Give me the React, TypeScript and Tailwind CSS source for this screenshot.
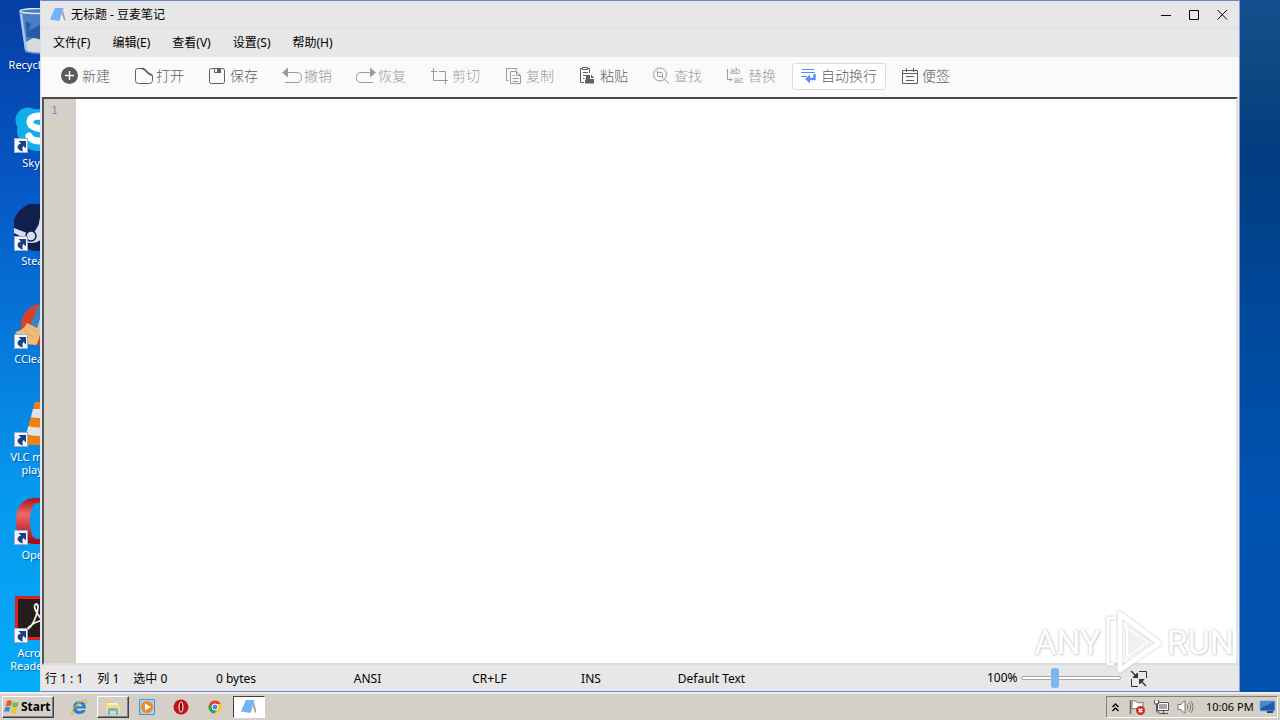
import { useState } from 'react';
import type { ReactNode } from 'react';
import { clsx } from 'clsx';

interface ToolItem {
  label: string;
  icon: ReactNode;
  disabled?: boolean;
}

interface DesktopItem {
  label: string;
  icon: ReactNode;
}

const MENUS = ['文件(F)', '编辑(E)', '查看(V)', '设置(S)', '帮助(H)'];

function ToolIcon({ children }: { children: ReactNode }) {
  return (
    <svg
      viewBox="0 0 18 18"
      className="h-[18px] w-[18px] shrink-0 overflow-visible"
      fill="none"
      stroke="currentColor"
      strokeWidth="1"
      aria-hidden="true"
    >
      {children}
    </svg>
  );
}

const TOOLS: ToolItem[] = [
  {
    label: '新建',
    icon: (
      <ToolIcon>
        <circle cx="9.5" cy="8.5" r="8.5" fill="#5a5a5a" stroke="none" />
        <path d="M9.500 4v9M5 8.500h9" stroke="#fff" strokeWidth="1.400" />
      </ToolIcon>
    ),
  },
  {
    label: '打开',
    icon: (
      <ToolIcon>
        <path d="M8.500 1.500H3.500Q1.500 1.500 1.500 3.500v10q0 3 3 3h11q3 0 3-3V8.500" />
        <path d="M8 1.500q2 .2 3.500 1.800l3 3q1.500 1.300 4 2.200" strokeWidth="1.800" />
      </ToolIcon>
    ),
  },
  {
    label: '保存',
    icon: (
      <ToolIcon>
        <rect x="1.500" y="1.500" width="15" height="15" rx="2" />
        <path d="M6.500 1.500v4h6v-4" />
        <path d="M9.500 1.500h3v4h-3z" fill="currentColor" />
      </ToolIcon>
    ),
  },
  {
    label: '撤销',
    disabled: true,
    icon: (
      <ToolIcon>
        <path d="M0 5.500 6 .5v10z" fill="currentColor" stroke="none" />
        <path d="M5 5.500h10q4.500 0 4.500 5t-4.500 5H3" />
      </ToolIcon>
    ),
  },
  {
    label: '恢复',
    disabled: true,
    icon: (
      <ToolIcon>
        <path d="M20 5.500 14 .5v10z" fill="currentColor" stroke="none" />
        <path d="M15 5.500H5q-4.500 0-4.500 5t4.500 5h12" />
      </ToolIcon>
    ),
  },
  {
    label: '剪切',
    disabled: true,
    icon: (
      <ToolIcon>
        <path d="M3.500 1v12.500H18M1 4.500h6M9 4.500h6.500V17" />
      </ToolIcon>
    ),
  },
  {
    label: '复制',
    disabled: true,
    icon: (
      <ToolIcon>
        <path d="M4.500 13.500h-2v-12h10v2" />
        <path d="M6.500 4.500h6l4 4v8h-10z" />
        <path d="M12.500 4.500v4h4M8.500 8.500h2M8.500 11.500h6M8.500 14.500h6" />
      </ToolIcon>
    ),
  },
  {
    label: '粘贴',
    icon: (
      <ToolIcon>
        <path d="M4 1.500H2.500v14H6M10 1.500h1.500V6" />
        <path d="M4.500 .5h5v2h-5zM5 5.500h5M5 8.500h3M5 11.500h1.500" />
        <path d="M8 8h4v4h4v4.500H7v-4h1z" fill="currentColor" stroke="none" />
        <path d="M13 7.500 16 11h-3z" fill="currentColor" stroke="none" />
      </ToolIcon>
    ),
  },
  {
    label: '查找',
    disabled: true,
    icon: (
      <ToolIcon>
        <circle cx="8" cy="7.500" r="6.500" />
        <path d="m12.500 12.500 4.500 4" />
        <rect x="5.500" y="5.500" width="5" height="4" rx="1" />
        <path d="M5.500 7.500V3.500M10.500 7v4.500" />
      </ToolIcon>
    ),
  },
  {
    label: '替换',
    disabled: true,
    icon: (
      <ToolIcon>
        <path d="M1.500 2v10.500h4M4 10.500l2 2-2 2" />
        <g fill="currentColor" stroke="none" fontFamily="Liberation Sans, sans-serif" fontSize="9">
          <text x="4" y="7">ab</text>
          <text x="8" y="16">ac</text>
        </g>
      </ToolIcon>
    ),
  },
];

function ShortcutArrow() {
  return (
    <g>
      <rect x=".5" y="32.500" width="13" height="14" fill="#f3f6fb" stroke="#9ab0c8" />
      <path d="M4.500 35h7.500v7.500l-2.500-2.500Q7.500 42 9 45.500 3.500 44 3.500 40.500 4 38 7 37.500z" fill="#1d3f80" />
    </g>
  );
}

function DesktopIcon({ children, shortcut = true }: { children: ReactNode; shortcut?: boolean }) {
  return (
    <svg viewBox="0 0 48 48" className="h-12 w-12" aria-hidden="true">
      {children}
      {shortcut && <ShortcutArrow />}
    </svg>
  );
}

const DESKTOP: DesktopItem[] = [
  {
    label: 'Recycle Bin',
    icon: (
      <DesktopIcon shortcut={false}>
        <path d="M5 3h38l-6 41q-13 4-26 0z" fill="#5f91cf" />
        <path d="M9 6h18v32H13z" fill="#4a7fc4" />
        <path d="m12 13 5 3-3 7 8-4 6-4v16l-15-2z" fill="#265aa8" />
        <path d="m12 34 7-4 9 2 8 5-1 6q-10 3-22 0z" fill="#d5dbdf" />
        <path d="m7 6 5 36" stroke="#a8c8ec" strokeWidth="2" />
        <ellipse cx="24" cy="3" rx="18" ry="2.500" fill="#4c7cbd" stroke="#d6e3f3" strokeWidth="1.500" />
      </DesktopIcon>
    ),
  },
  {
    label: 'Skype',
    icon: (
      <DesktopIcon>
        <circle cx="14" cy="14" r="12.500" fill="#12aeea" />
        <circle cx="34" cy="34" r="12.500" fill="#12aeea" />
        <circle cx="24" cy="24" r="21" fill="#12aeea" />
        <path
          d="M34 15q-4-5-10-5-9 1-8 7 1 4 9 5.500t9 6.500q0 6-9 6-7 0-10-5"
          fill="none"
          stroke="#fff"
          strokeWidth="7"
          strokeLinecap="round"
        />
      </DesktopIcon>
    ),
  },
  {
    label: 'Steam',
    icon: (
      <DesktopIcon>
        <circle cx="23" cy="23" r="24" fill="#101f4c" />
        <path d="M0 24l13 5q4-2 7 0l5-9q0-10 8-12h8v18l-11 4q-3 9-12 9-7 0-8-5L0 29z" fill="#d5dfeb" />
        <circle cx="17" cy="32" r="5" fill="#d5dfeb" stroke="#101f4c" strokeWidth="1.500" />
        <circle cx="34" cy="17" r="6" fill="#2f5f9c" />
      </DesktopIcon>
    ),
  },
  {
    label: 'CCleaner',
    icon: (
      <DesktopIcon>
        <circle cx="28" cy="23" r="21" fill="#d7402b" />
        <circle cx="29" cy="24" r="10" fill="#b9c8d4" />
        <path d="m24 4 6-2-7 25-7-3z" fill="#3a83bd" />
        <path d="m13 21 12 6q2 9-3 16l-10-1L1 30q8-1 12-9z" fill="#f0bd78" />
        <path d="m14 24 9 6M10 28l10 8" stroke="#dca764" strokeWidth="1" />
      </DesktopIcon>
    ),
  },
  {
    label: 'VLC media player',
    icon: (
      <DesktopIcon>
        <path d="M10 33h28l6 12H7z" fill="#f08010" />
        <path d="M21 2h6l10 36q-13 5-26 0z" fill="#f08010" />
        <path d="m19 9-2 8q7 2 14 0l-2-8zM14.500 26 12 34q12 4 24 0l-2.500-8q-9.500 3-19 0z" fill="#dfe5e8" />
      </DesktopIcon>
    ),
  },
  {
    label: 'Opera',
    icon: (
      <DesktopIcon>
        <defs>
          <linearGradient id="opera" x1="0" y1="0" x2="0" y2="1">
            <stop offset="0" stopColor="#a90f18" />
            <stop offset=".35" stopColor="#ec6a68" />
            <stop offset="1" stopColor="#a8000c" />
          </linearGradient>
        </defs>
        <path
          fillRule="evenodd"
          d="M24 0q22 1 22 23T24 46 2 23 24 0zm0 5q-8 0-8 18t8 18 8-18-8-18z"
          fill="url(#opera)"
        />
      </DesktopIcon>
    ),
  },
  {
    label: 'Acrobat Reader DC',
    icon: (
      <DesktopIcon>
        <rect x="2.500" y="1.500" width="43" height="41" fill="#251c1e" stroke="#e01f1f" strokeWidth="3" />
        <path
          d="M12 34q6-2 10-14t0-12q-4 2 3 12t15 7q2-4-9-3t-19 10z"
          fill="none"
          stroke="#f2eee6"
          strokeWidth="1.800"
        />
      </DesktopIcon>
    ),
  },
];

function NoteLogo({ className }: { className?: string }) {
  return (
    <svg viewBox="0 0 16 16" className={className} aria-hidden="true">
      <path d="m9 2 4 1 2.500 11-5-1z" fill="#f4f4f4" />
      <path d="M5 1h8.500L9.500 14 0 12.500z" fill="#72b3f6" />
      <path d="m13 3 2.500 10.500h-1.500L12 7z" fill="#a89c92" />
    </svg>
  );
}

function TitleBar() {
  return (
    <header className="flex h-7 items-center justify-between border-b border-[#dcdcdc] bg-[#e7e7e7] pr-2 pl-2">
      <div className="flex items-center gap-1">
        <NoteLogo className="h-[16px] w-[18px]" />
        <h1 className="text-[12px] leading-4">无标题 - 豆麦笔记</h1>
      </div>
      <div className="flex gap-[10px]">
        <button type="button" aria-label="最小化" className="grid h-[18px] w-[18px] place-items-center">
          <svg viewBox="0 0 11 11" className="h-[11px] w-[11px]" stroke="#000">
            <path d="M0 6.500h10" />
          </svg>
        </button>
        <button type="button" aria-label="最大化" className="grid h-[18px] w-[18px] place-items-center">
          <svg viewBox="0 0 11 11" className="h-[11px] w-[11px]" fill="none" stroke="#000">
            <path d="M.5 1.500h9v9h-9z" />
          </svg>
        </button>
        <button type="button" aria-label="关闭" className="grid h-[18px] w-[18px] place-items-center">
          <svg viewBox="0 0 11 11" className="h-[11px] w-[11px]" stroke="#000" strokeWidth="1">
            <path d="m.5 1 9.500 9.500M10 1 .5 10.500" />
          </svg>
        </button>
      </div>
    </header>
  );
}

function Toolbar() {
  const [wrap, setWrap] = useState(true);

  return (
    <div
      className="flex h-10 items-center bg-[#fafafa] pb-[2px] pl-[7px] text-[14px] leading-5 font-light text-[#606060]"
      role="toolbar"
    >
      {TOOLS.map((tool) => (
        <button
          key={tool.label}
          type="button"
          disabled={tool.disabled}
          className={clsx('flex w-[74px] shrink-0 items-center gap-1 pl-3', tool.disabled && 'text-[#9a9a9a]')}
        >
          {tool.icon}
          {tool.label}
        </button>
      ))}
      <button
        type="button"
        aria-pressed={wrap}
        onClick={() => setWrap(!wrap)}
        className={clsx(
          'ml-1 flex h-[27px] shrink-0 items-center gap-1 rounded-[3px] border px-2',
          wrap ? 'border-[#dcdcdc] bg-white' : 'border-transparent'
        )}
      >
        <svg viewBox="0 0 16 16" className="h-4 w-4" fill="none" stroke="#5b8ff5" aria-hidden="true">
          <path d="M1 1.500h12M0 4.500h14M0 8.500h6" strokeWidth="1.200" />
          <path d="M13.500 6v5H8" strokeWidth="2.400" />
          <path d="m4 11 5-4.500v9z" fill="#5b8ff5" stroke="none" />
        </svg>
        自动换行
      </button>
      <button type="button" className="ml-4 flex shrink-0 items-center gap-1">
        <svg viewBox="0 0 16 16" className="h-4 w-4" fill="none" stroke="currentColor" aria-hidden="true">
          <path d="M.5 2.500h15v13H.5zM4.500 0v4M11.500 0v4M.5 5.500h15M4 8.500h8M4 12.500h8" />
        </svg>
        便签
      </button>
    </div>
  );
}

function Editor() {
  return (
    <div className="mx-px flex flex-1 border-2 border-t-[#4a4a4a] border-r-[#e6e6da] border-b-[#dcdcdc] border-l-[#555] bg-white">
      <div className="w-8 bg-[#d4d0c8] pt-1 pl-[7px] font-['DejaVu_Sans_Mono',monospace] text-[11px] leading-4 text-[#6f93d8]">
        1
      </div>
      <textarea aria-label="正文" className="flex-1 resize-none bg-white px-1 outline-none" />
    </div>
  );
}

function StatusBar() {
  return (
    <footer className="flex h-[26px] items-center bg-[#e7e7e7] text-[12px] leading-4">
      <div className="flex pt-[2px]">
        <div className="flex w-[173px] gap-[14px] pl-1">
          <span>行 1 : 1</span>
          <span>列 1</span>
          <span>选中 0</span>
        </div>
        <div className="w-[82px] border-l border-[#ebebeb] pl-px">0 bytes</div>
        <div className="w-[142px] border-l border-[#ebebeb] text-center">ANSI</div>
        <div className="w-[102px] border-l border-[#ebebeb] text-center">CR+LF</div>
        <div className="w-[101px] border-l border-[#ebebeb] text-center">INS</div>
        <div className="w-[141px] border-x border-[#ebebeb] text-center">Default Text</div>
      </div>
      <div className="ml-auto flex items-center pr-[92px]">
        <label htmlFor="zoom" className="w-[34px]">
          100%
        </label>
        <input
          id="zoom"
          type="range"
          defaultValue={32}
          className="h-5 w-[100px] appearance-none bg-transparent [&::-webkit-slider-runnable-track]:h-1 [&::-webkit-slider-runnable-track]:rounded-full [&::-webkit-slider-runnable-track]:border [&::-webkit-slider-runnable-track]:border-[#a8a8a8] [&::-webkit-slider-runnable-track]:bg-white [&::-webkit-slider-thumb]:-mt-[9px] [&::-webkit-slider-thumb]:h-5 [&::-webkit-slider-thumb]:w-2 [&::-webkit-slider-thumb]:appearance-none [&::-webkit-slider-thumb]:rounded-[3px] [&::-webkit-slider-thumb]:bg-[#7db7ef]"
        />
        <button type="button" aria-label="退出全屏" className="ml-[9px]">
          <svg viewBox="0 0 17 17" className="h-[17px] w-[17px]" fill="none" stroke="#333" aria-hidden="true">
            <path d="M9 1.500h7.500V8M1.500 9v7.500H8" />
            <path d="m1 1 6 6M16 16l-6-6" strokeWidth="1.400" />
            <path d="M7.500 3v4.500H3z" fill="#333" />
            <path d="M9.500 14V9.500H14z" fill="#333" />
          </svg>
        </button>
      </div>
    </footer>
  );
}

function Watermark() {
  return (
    <div
      className="pointer-events-none absolute right-[6px] bottom-[18px] flex items-center gap-1 font-['Liberation_Sans_Narrow','Roboto',sans-serif] text-[34px] leading-[64px] text-white [text-shadow:0_0_2px_#ccc,0_0_3px_#ddd,1px_1px_2px_#d4d4d4]"
      aria-hidden="true"
    >
      <span>ANY</span>
      <svg
        viewBox="0 0 58 64"
        className="h-16 w-[58px] drop-shadow-[0_0_1px_#bbb]"
        fill="none"
        stroke="#fff"
        strokeLinejoin="round"
      >
        <path d="M11 8H3v46h6" strokeWidth="3" />
        <path d="M15 4v56l39-27z" strokeWidth="5" />
        <path d="m22 18 22 14-22 15z" fill="#f0f0f0" strokeWidth="2" />
      </svg>
      <span>RUN</span>
    </div>
  );
}

const TASKS = [
  {
    name: 'Internet Explorer',
    state: '',
    icon: (
      <>
        <path
          d="M15 9.500H5.500q.5 2.500 3 2.500 2 0 2.700-1h3.500q-1.500 4-6.200 4-6.500 0-6.500-6.300T8.500 2.300 15 9.500zM5.500 7.200h6q-.5-2.200-3-2.200t-3 2.200z"
          fill="#2a7fd4"
          fillRule="evenodd"
        />
        <path d="M3 15Q-1 16 2 10 8 2 14 1q2.500 0 .5 4" fill="none" stroke="#e2b534" strokeWidth="1.200" />
      </>
    ),
  },
  {
    name: 'Windows Explorer',
    state: 'open',
    icon: (
      <>
        <path d="M1 2h6l1 2h7v9H1z" fill="#e9c867" />
        <path d="M2 4h11v8H2z" fill="#fff3bd" />
        <path d="M1 6h14v8H1z" fill="#f4db87" />
        <path d="M3 16v-5q0-2 2-2h6q2 0 2 2v5h-2v-4H5v4z" fill="#6ab6e0" />
      </>
    ),
  },
  {
    name: 'Windows Media Player',
    state: '',
    icon: (
      <>
        <path d="M.5 .5h15v15H.5z" fill="#a5d0ef" stroke="#4e94cc" />
        <circle cx="8" cy="8" r="6" fill="#f18a1c" />
        <path d="m6 4.500 6 3.500-6 3.500z" fill="#fff" />
      </>
    ),
  },
  {
    name: 'Opera',
    state: '',
    icon: (
      <>
        <circle cx="8" cy="8" r="7.500" fill="#c0141c" />
        <ellipse cx="8" cy="8" rx="2.500" ry="5.500" fill="#f4dede" />
        <ellipse cx="8" cy="8" rx="1.300" ry="4.500" fill="#8c0810" />
      </>
    ),
  },
  {
    name: 'Google Chrome',
    state: '',
    icon: (
      <>
        <circle cx="8" cy="8" r="6.500" fill="#f6c927" />
        <path d="M2.400 4.700A6.500 6.500 0 0 1 13.800 5H8z" fill="#db4437" />
        <path d="M2.400 4.700A6.500 6.500 0 0 0 7.500 14.500L10 10 5 9.500z" fill="#2ba05a" />
        <path d="M2.400 4.700 8 4.900 5 9.500z" fill="#db4437" />
        <circle cx="8" cy="8" r="3" fill="#4285f4" stroke="#fff" />
      </>
    ),
  },
];

const RAISED =
  'border border-t-white border-l-white border-r-[#404040] border-b-[#404040] shadow-[inset_-1px_-1px_#808080]';

function Taskbar() {
  return (
    <nav className="flex h-7 items-center justify-between border-t-2 border-t-[#efeeea] bg-[#d4d0c8] px-[2px] text-[12px] leading-4">
      <div className="flex items-center">
        <button
          type="button"
          className={clsx('flex h-[22px] w-[52px] items-center gap-px pl-px text-[12px] font-bold', RAISED)}
        >
          <svg viewBox="0 0 16 16" className="h-4 w-4 shrink-0" aria-hidden="true">
            <path d="M3 2q3-1.500 5 .5L6.500 7.500q-2.500-1.500-5 0z" fill="#e8562a" />
            <path d="M9 3q3 1.500 6 0l-1.500 5q-3 1-5.500-.5z" fill="#7dbb3c" />
            <path d="M1.200 8.500q2.500-1.500 5 0L4.800 13q-2.500-1.500-4.800 0z" fill="#3d8ad8" />
            <path d="M7.500 9q3 1.200 5.500 .3L11.500 14q-2.500 1.200-5.300-.4z" fill="#f5bf2f" />
          </svg>
          Start
        </button>
        <div className="ml-[9px] flex gap-[2px]">
          {TASKS.map((task) => (
            <button
              key={task.name}
              type="button"
              aria-label={task.name}
              className={clsx('grid h-[22px] w-8 place-items-center', task.state === 'open' && RAISED)}
            >
              <svg viewBox="0 0 16 16" className="h-4 w-4" aria-hidden="true">
                {task.icon}
              </svg>
            </button>
          ))}
          <button
            type="button"
            aria-label="豆麦笔记"
            className="grid h-[22px] w-8 place-items-center border border-t-[#404040] border-r-white border-b-white border-l-[#404040] bg-white"
          >
            <NoteLogo className="h-4 w-4" />
          </button>
        </div>
      </div>

      {/* Notification area */}
      <div className="flex h-[22px] items-center border border-t-[#808080] border-r-white border-b-white border-l-[#808080] pr-px pl-[5px]">
        <svg viewBox="0 0 7 9" className="h-[9px] w-[7px]" fill="none" stroke="#000" strokeWidth="1.400" aria-hidden="true">
          <path d="m.5 4 3-3 3 3M.5 8l3-3 3 3" />
        </svg>
        <svg viewBox="0 0 18 16" className="ml-[10px] h-4 w-[18px]" aria-hidden="true">
          <path d="M1.500 1v14" stroke="#666" strokeWidth="1.500" />
          <path d="M3 2q3-1 5 1t6 0v7q-3 1-5 0t-6 0z" fill="#fff" stroke="#777" />
          <circle cx="11.500" cy="11.500" r="4.500" fill="#d42a25" />
          <path d="m9.700 9.700 3.600 3.600m0-3.600-3.600 3.600" stroke="#fff" strokeWidth="1.500" />
        </svg>
        <svg viewBox="0 0 16 16" className="ml-[6px] h-4 w-4" fill="none" aria-hidden="true">
          <path d="M4.500 3.500h11v8h-11z" fill="#a4a8aa" stroke="#fff" strokeWidth="1.500" />
          <path d="M5.500 4.500h9v6h-9z" stroke="#fff" />
          <path d="M4.500 3.500h11v8h-11zM6 14.500h9M10.500 12v2" stroke="#555" />
          <path d="M1.500 1v4h4V1M3.500 5v8h3" stroke="#555" />
          <path d="M2 2h3v2H2z" fill="#fff" />
        </svg>
        <svg viewBox="0 0 17 16" className="ml-2 h-4 w-[17px]" fill="none" stroke="#777" aria-hidden="true">
          <path d="M1 5.500h3l4-4v13l-4-4H1z" fill="#fff" />
          <path d="M10 5.500q2 2.500 0 5M12 3.500q3.500 4.500 0 9M14 2q4 6 0 12" />
        </svg>
        <span className="ml-3 w-[49px] text-[11px] whitespace-nowrap">10:06 PM</span>
        <svg viewBox="0 0 17 14" className="ml-1 h-[14px] w-[17px]" aria-hidden="true">
          <path d="M1 1h15v10H1z" fill="#1e56ac" stroke="#8fb4dc" />
          <path d="M2 2h13L2 8z" fill="#4586d6" />
          <path d="M8 11h6v2H8z" fill="#26466e" />
        </svg>
      </div>
    </nav>
  );
}

export default function App() {
  return (
    <div className="flex min-h-screen flex-col font-['Noto_Sans','Noto_Sans_CJK_SC',sans-serif] text-black">
      <div className="relative flex flex-1">
        {/* Desktop shortcuts, partly hidden by the window */}
        <aside className="w-10 shrink-0 overflow-hidden bg-[linear-gradient(#063ea2,#0655c4_25%,#0679dd_50%,#0699ee_72%,#05acf8)]">
          <ul className="w-[75px]">
            {DESKTOP.map((item) => (
              <li key={item.label} className="flex h-[98px] flex-col items-center pt-2">
                {item.icon}
                <span className="mt-[2px] text-center text-[11px] leading-[13px] text-white [text-shadow:1px_1px_1px_#0006]">
                  {item.label}
                </span>
              </li>
            ))}
          </ul>
        </aside>

        <main className="flex min-w-0 flex-1 flex-col border border-t-[#6b86d2] border-r-[#7f9fe0] border-b-[#6f7fdc] border-l-[#d5def2] bg-[#e7e7e7]">
          <TitleBar />
          <div className="flex h-7 items-center gap-[22px] pl-3 text-[12px] leading-4" role="menubar">
            {MENUS.map((menu) => (
              <button key={menu} type="button" role="menuitem">
                {menu}
              </button>
            ))}
          </div>
          <Toolbar />
          <Editor />
          <StatusBar />
        </main>

        <aside className="w-10 shrink-0 bg-[linear-gradient(#14508f,#0f4782_10%,#023c80_22%,#00489a_45%,#0052b2_72%,#0050ac)]" />

        <div className="pointer-events-none absolute inset-x-10 inset-y-0">
          <Watermark />
        </div>
      </div>
      <Taskbar />
    </div>
  );
}
